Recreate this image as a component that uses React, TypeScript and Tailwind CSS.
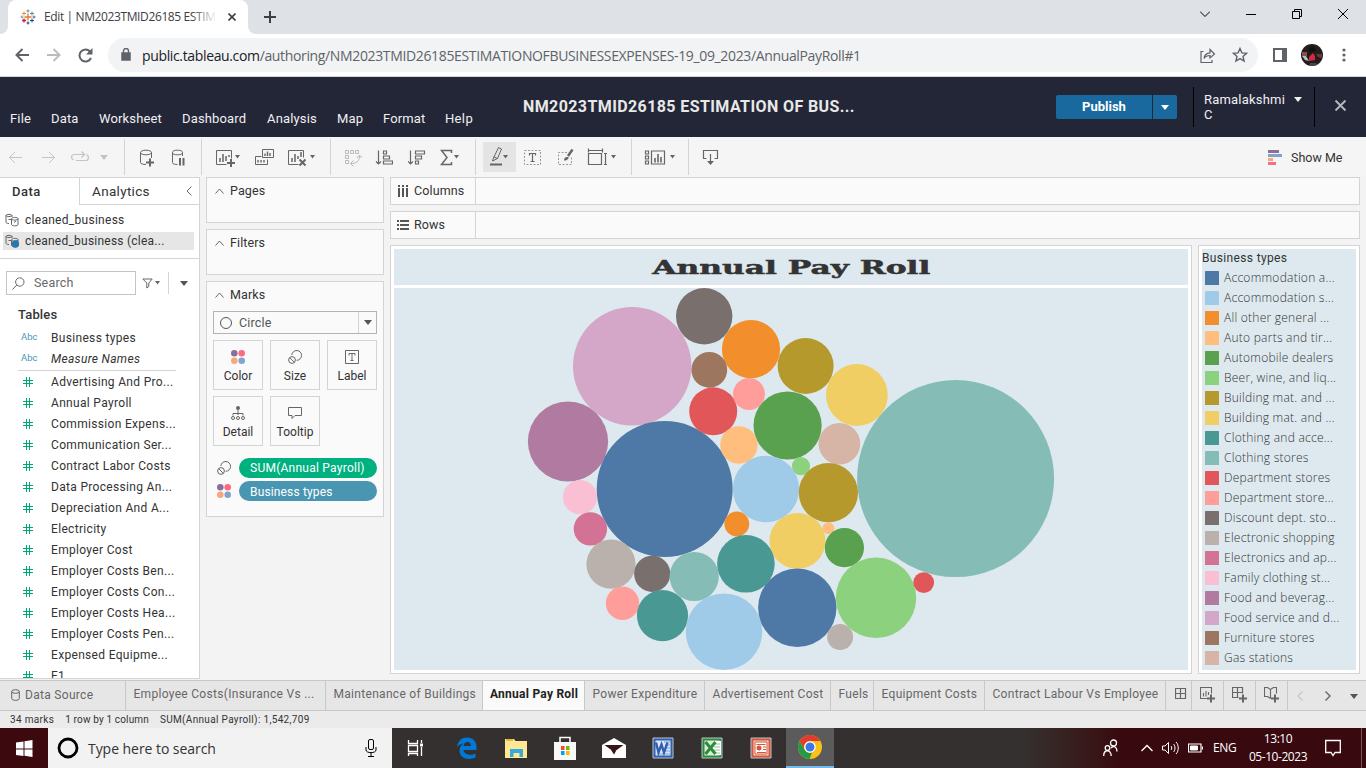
import React from "react";

type Kids = { children?: React.ReactNode };

const C = {
  blue: "#4e79a7", lblue: "#a0cbe8", orange: "#f28e2b", peach: "#ffbe7d", green: "#59a14f",
  lgreen: "#8cd17d", gold: "#b6992d", yellow: "#f1ce63", teal: "#499894", lteal: "#86bcb6",
  red: "#e15759", salmon: "#ff9d9a", dark: "#79706e", grey: "#bab0ac", rose: "#d37295",
  pink: "#fabfd2", plum: "#b07aa1", lplum: "#d4a6c8", brown: "#9d7660", tan: "#d7b5a6",
};

const bubbles: [number, number, number, string][] = [
  [704.2, 316.3, 28.2, C.dark], [632.2, 366.2, 59.2, C.lplum], [751, 349.2, 29.1, C.orange],
  [709.3, 369.8, 17.9, C.brown], [805.6, 366, 28, C.gold], [856.9, 395, 30.9, C.yellow],
  [955.6, 478.6, 98.5, C.lteal], [568, 441.5, 40.1, C.plum], [664.7, 489, 68, C.blue],
  [713.2, 411.3, 24, C.red], [749, 394, 16, C.salmon], [787.6, 425.5, 34.1, C.green],
  [738.9, 445, 18.7, C.peach], [839.4, 443.8, 20.8, C.tan], [801, 466.2, 9.1, C.lgreen],
  [766, 489, 33.2, C.lblue], [828.4, 492.7, 29.6, C.gold], [580, 497.2, 17.1, C.pink],
  [590.4, 528.9, 16.7, C.rose], [736.8, 524, 12.4, C.orange], [797.5, 541, 28, C.yellow],
  [828.4, 528.2, 6, C.peach], [844.4, 547.7, 19.6, C.green], [611, 564.1, 24.6, C.grey],
  [652.2, 573.8, 18.1, C.dark], [694.2, 576.5, 24.6, C.lteal], [745.9, 563.8, 28.8, C.teal],
  [622.5, 603.3, 16.7, C.salmon], [662.5, 615.6, 25.6, C.teal], [724, 631.7, 38.3, C.lblue],
  [797.3, 607.8, 39.2, C.blue], [876, 597.8, 40.2, C.lgreen], [923.7, 582.6, 10.4, C.red],
  [840.1, 637, 13, C.grey],
];

const legend: [string, string][] = [
  ["Accommodation a...", C.blue], ["Accommodation s...", C.lblue], ["All other general ...", C.orange],
  ["Auto parts and tir...", C.peach], ["Automobile dealers", C.green], ["Beer, wine, and liq...", C.lgreen],
  ["Building mat. and ...", C.gold], ["Building mat. and ...", C.yellow], ["Clothing and acce...", C.teal],
  ["Clothing stores", C.lteal], ["Department stores", C.red], ["Department store...", C.salmon],
  ["Discount dept. sto...", C.dark], ["Electronic shopping", C.grey], ["Electronics and ap...", C.rose],
  ["Family clothing st...", C.pink], ["Food and beverag...", C.plum], ["Food service and d...", C.lplum],
  ["Furniture stores", C.brown], ["Gas stations", C.tan],
];

const measures = [
  "Advertising And Pro...", "Annual Payroll", "Commission Expens...", "Communication Ser...",
  "Contract Labor Costs", "Data Processing An...", "Depreciation And A...", "Electricity", "Employer Cost",
  "Employer Costs Ben...", "Employer Costs Con...", "Employer Costs Hea...", "Employer Costs Pen...",
  "Expensed Equipme...", "F1",
];

function Svg({ w, h = 20, c = "", children }: Kids & { w: number; h?: number; c?: string }) {
  return (
    <svg width={w} height={h} viewBox={`0 0 ${w} ${h}`} fill="none" stroke="currentColor" className={`block shrink-0 ${c}`}>
      {children}
    </svg>
  );
}

function Caret({ c = "" }: { c?: string }) {
  return <Svg w={5} h={4} c={`mr-px ${c}`}><path d="M0 0H5L2.500 3.500Z" fill="currentColor" stroke="none" /></Svg>;
}

function Sep({ c = "" }: { c?: string }) {
  return <div className={`h-9 w-px shrink-0 bg-[#d4d4d4] ${c}`} />;
}

function BrowserTabs() {
  return (
    <div className="flex h-[34px] shrink-0 bg-[#dee1e6] text-[#202124]">
      <div className="flex w-[8px] items-end bg-white"><div className="h-full w-full rounded-br-lg bg-[#dee1e6]" /></div>
      <div className="flex w-[240px] items-center rounded-t-lg bg-white pl-[12px]">
        <Svg w={16} h={16}>
          <path d="M8 4.500v7M4.500 8h7" stroke="#e8762d" strokeWidth="1.300" />
          <path d="M8 .5v3M6.500 2h3" stroke="#5b879b" />
          <path d="M8 12.500v3M6.500 14h3" stroke="#1f447e" />
          <path d="M.5 8h3M2 6.500v3" stroke="#7099a6" /><path d="M12.500 8h3M14 6.500v3" stroke="#5b6591" />
          <path d="M4 2.500v4M2 4.500h4" stroke="#eb912c" /><path d="M12 2.500v4M10 4.500h4" stroke="#59879b" />
          <path d="M4 9.500v4M2 11.500h4" stroke="#c72037" strokeWidth="1.300" />
          <path d="M12 9.500v4M10 11.500h4" stroke="#1f447e" />
        </Svg>
        <div className="relative ml-[8px] w-[173px] overflow-hidden whitespace-nowrap text-[12px] tracking-[-0.38px] text-[#3c4043]">
          Edit | NM2023TMID26185 ESTIM
          <div className="absolute inset-y-0 right-0 w-[26px] bg-linear-to-r from-transparent to-white" />
        </div>
        <Svg w={8} h={8} c="ml-[11px] text-[#3c4043]"><path d="M.5.5l7 7M7.500.5l-7 7" strokeWidth="1.600" /></Svg>
      </div>
      <div className="w-[8px] bg-white"><div className="h-full rounded-bl-lg bg-[#dee1e6]" /></div>
      <Svg w={12} h={34} c="ml-[8px] text-[#3c4043]"><path d="M6 11v12M0 17h12" strokeWidth="2" /></Svg>
      <div className="ml-auto flex h-7 items-center text-black">
        <Svg w={10} h={6} c="mr-[36px]"><path d="M0 .5l5 5 5-5" /></Svg>
        <Svg w={10} h={10} c="mr-[36px]"><path d="M0 5.500h10" /></Svg>
        <Svg w={10} h={10} c="mr-[36px]"><path d="M.5 2.500h7v7h-7zM2.500 2.500v-2h7v7h-2" /></Svg>
        <Svg w={10} h={10} c="mr-[18px]"><path d="M0 0l10 10M10 0L0 10" /></Svg>
      </div>
    </div>
  );
}

function AddressBar() {
  return (
    <div className="flex h-[43px] shrink-0 items-center border-b border-[#d3d6da] bg-white pl-[15px] text-[#5f6368]">
      <Svg w={14} h={14}><path d="M14 7H1.500M7.500 1L1.500 7l6 6" strokeWidth="2" /></Svg>
      <Svg w={14} h={14} c="ml-[18px] text-[#babcbe]"><path d="M0 7h12.500M6.500 1l6 6-6 6" strokeWidth="2" /></Svg>
      <Svg w={15} h={15} c="ml-[17px]"><path d="M13 10A6 6 0 1 1 12 3.500" strokeWidth="2" /><path d="M14.500 0v6.500H8z" fill="currentColor" stroke="none" /></Svg>
      <div className="ml-[15px] flex h-[34px] w-[1150px] items-center rounded-full bg-[#f1f3f4]">
        <Svg w={10} h={14} c="ml-[13px]"><path d="M1 5h8v7H1z" fill="currentColor" strokeWidth="1.500" /><path d="M2.500 5V3a2.500 2.500 0 0 1 5 0v2" strokeWidth="1.400" /></Svg>
        <div className="ml-[11px] whitespace-nowrap text-[14px] tracking-[-0.355px]">
          <span className="text-[#202124]">public.tableau.com</span>/authoring/NM2023TMID26185ESTIMATIONOFBUSINESSEXPENSES-19_09_2023/AnnualPayRoll#1
        </div>
        <Svg w={16} h={15} c="mr-[16px] ml-auto"><path d="M3.500 3.500H1v11h11v-2.500M4 10.500C4.500 6.500 6.500 5 10 4.800V1.500l4.500 4.500L10 10V7.500C7.500 7.500 5.500 8 4 10.500z" strokeWidth="1.200" /></Svg>
        <Svg w={16} h={16} c="mr-[10px]"><path d="M8 1.500l1.900 4.400 4.700.4-3.600 3.100 1.100 4.600L8 11.600 3.900 14 5 9.400 1.400 6.300l4.700-.4z" strokeWidth="1.400" /></Svg>
      </div>
      <Svg w={14} h={14} c="ml-[15px]"><path d="M1 1h12v12H1z" strokeWidth="2" /><path d="M9 1h4v12H9z" fill="currentColor" stroke="none" /></Svg>
      <Svg w={22} h={22} c="ml-[14px]">
        <clipPath id="face"><circle cx="11" cy="11" r="11" /></clipPath>
        <g clipPath="url(#face)" stroke="none">
          <path d="M0 0h22v22H0z" fill="#241c1c" /><path d="M1 8h5v4H1z" fill="#8a5145" /><path d="M1 12h4l3 5-4-1z" fill="#a9c3cc" />
          <path d="M8 13l4-4 2 3v4l-6 1z" fill="#d8283f" /><path d="M15 10h6v4l-4-1z" fill="#5d4038" /><path d="M8 4l4-2 3 5-6 2z" fill="#111" />
          <path d="M9 19h6l2 3H8z" fill="#4a4544" />
        </g>
      </Svg>
      <Svg w={4} h={14} c="ml-[19px]"><g fill="currentColor" stroke="none"><circle cx="2" cy="2" r="1.600" /><circle cx="2" cy="7" r="1.600" /><circle cx="2" cy="12" r="1.600" /></g></Svg>
    </div>
  );
}

function Header() {
  return (
    <div className="flex h-[60px] shrink-0 bg-[#232637] font-['Roboto',sans-serif] text-[#f0f0f2]">
      <div className="flex w-[523px] items-end pb-[10px] pl-[10px] text-[13px] leading-[17px] tracking-[0.15px]">
        <span className="w-[41px]">File</span><span className="w-[48px]">Data</span><span className="w-[83px]">Worksheet</span>
        <span className="w-[85px]">Dashboard</span><span className="w-[70px]">Analysis</span><span className="w-[46px]">Map</span>
        <span className="w-[62px]">Format</span><span className="tracking-[0.35px]">Help</span>
      </div>
      <div className="w-[533px] pt-[18px] text-[16px] leading-6 font-bold tracking-[0.4px] whitespace-nowrap text-[#e8e8e8]">NM2023TMID26185 ESTIMATION OF BUS...</div>
      <div className="mt-[18px] flex h-6 w-[121px] gap-px">
        <div className="w-24 rounded-l-xs bg-[#1a699e] text-center text-[13px] leading-6 font-bold text-white">Publish</div>
        <div className="flex flex-1 items-center justify-center rounded-r-xs bg-[#1a699e] text-white"><Svg w={8} h={5}><path d="M0 0h8L4 5z" fill="currentColor" stroke="none" /></Svg></div>
      </div>
      <div className="mt-[10px] ml-[16px] flex h-10 w-[122px] border-x border-black pt-[5px] pl-[10px] text-[13px] leading-[15px] tracking-[0.2px]">
        <div className="w-[90px]">Ramalakshmi<br />C</div>
        <Svg w={8} h={5} c="mt-[5px]"><path d="M0 0h8L4 5z" fill="currentColor" stroke="none" /></Svg>
      </div>
      <Svg w={11} h={11} c="mt-[23px] ml-[20px] text-[#b5b6bc]"><path d="M.5.5l10 10M10.500.5l-10 10" strokeWidth="2" /></Svg>
    </div>
  );
}

function Toolbar() {
  return (
    <div className="flex h-10 shrink-0 items-center bg-[#f5f5f5] pl-[8px] text-[#666]">
      <Svg w={16} c="text-[#c4c4c4]"><path d="M14 10.500H1.500M7 5l-5.500 5.500L7 16" /></Svg>
      <Svg w={16} c="ml-[17px] text-[#c4c4c4]"><path d="M1 10.500h12.500M8 5l5.500 5.500L8 16" /></Svg>
      <Svg w={20} c="ml-[13px] text-[#c4c4c4]"><path d="M3.500 13C.5 11.500 1 7.500 4.500 7.500H14M11.500 4.500l3 3-3 3M6 13.500h9.500c3.500 0 4-4.500 1-6" strokeWidth="1.200" /></Svg>
      <Svg w={8} h={5} c="ml-[10px] text-[#c4c4c4]"><path d="M0 0h8L4 5z" fill="currentColor" stroke="none" /></Svg>
      <Sep c="ml-[16px]" />
      <Svg w={16} c="ml-[14px]"><path d="M7 17.500c-3 0-5.500-.7-5.500-2V5.500M12.500 5.500V11" /><ellipse cx="7" cy="5.500" rx="5.500" ry="2.300" /><path d="M11 11.500v8M7 15.500h8" strokeWidth="2" /></Svg>
      <Svg w={14} c="ml-[16px]"><path d="M6.500 17.500c-3 0-5-.7-5-2V5.500M11.500 5.500V9" /><ellipse cx="6.500" cy="5.500" rx="5" ry="2.300" /><path d="M9 11v7.500M12.500 11v7.500" strokeWidth="2" /></Svg>
      <Sep c="ml-[16px]" />
      <Svg w={20} c="ml-[13px]"><path d="M11.500 17.500h-10v-14h15v8" /><path d="M5 11v4M8 7v8M11 9v5M14 8v2" strokeWidth="1.500" /><path d="M16 12v8M12 16h8" strokeWidth="2" /></Svg>
      <Caret /><div className="w-[14px]" />
      <Svg w={19}><path d="M7.500 2.500h11v8h-11zM12.500 12.500v5h-12v-8h6" /><path d="M10 6.500v2.500M12.500 4.500V9M15 6v3M3 13v2.500M6 13v2.500M9 13v2.500" strokeWidth="1.400" /></Svg>
      <Svg w={21} c="ml-[13px]"><path d="M11.500 17.500h-10v-14h15v7" /><path d="M5 11v4M8 7v8M11 9v3M14 5v5" strokeWidth="1.500" /><path d="M12.500 12.500l6 6M18.500 12.500l-6 6" strokeWidth="2" /></Svg>
      <Caret c="ml-[2px]" />
      <Sep c="ml-[14px]" />
      <Svg w={18} c="ml-[13px] text-[#b9b9b9]"><path d="M1.500 3.500h3v3h-3zM6.500 3.500h3v3h-3zM11.500 3.500h3v3h-3zM1.500 8.500h3v3h-3zM1.500 13.500h3v3h-3zM7 16.500c5 0 8.500-2 8.500-7.500M9.500 13.500l-3 3 3 3M13 11l2.500-3 2.500 3" /></Svg>
      <Svg w={18} c="ml-[13px]"><path d="M3.500 3.500V16M1 14.500l2.500 2.500L6 14.500M8.500 4h3v3h-3zM8.500 9h6v3h-6zM8.500 14h9v3h-9z" strokeWidth="1.200" /></Svg>
      <Svg w={18} c="ml-[15px]"><path d="M2.500 3.500V16M0 14.500l2.500 2.500L5 14.500M7.500 4h9v3h-9zM7.500 9h6v3h-6zM7.500 14h3v3h-3z" strokeWidth="1.200" /></Svg>
      <Svg w={14} c="ml-[14px]"><path d="M11.500 6V3.500h-10l5.500 7-5.500 7h10V15" strokeWidth="1.500" /></Svg>
      <Caret />
      <Sep c="ml-[15px]" />
      <div className="ml-[7px] flex h-[30px] w-[33px] items-center bg-[#e4e4e4] pl-[7px]">
        <Svg w={13}><path d="M8.500.5l3 1.500-4 9.500-3.500-1.500zM4 9.500L2.500 14l5-2.500" /><path d="M0 17.500h12" strokeWidth="2" /></Svg>
        <Caret />
      </div>
      <Svg w={18} c="ml-[8px]"><path d="M.5 3.500h16v14H.5z" strokeDasharray="2 1.500" stroke="#999" /><path d="M5.500 8.500v-2h6v2M8.500 6.500v8M6.500 14.500h4" strokeWidth="1.200" /></Svg>
      <Svg w={17} c="ml-[15px]"><path d="M10 5.500H1.500v12h13V9" strokeDasharray="2 1.500" stroke="#999" /><path d="M15.500 2.500L11 9" strokeWidth="2.500" /><path d="M7 13.500c0-3 2-4 4-3.500s-1 4-4 3.500z" fill="currentColor" stroke="none" /></Svg>
      <Svg w={21} c="ml-[13px]"><path d="M1.500 6.500h13v11h-13zM1 3.500h15M1.500 1.500v4M15.500 1.500v4M18.500 6.500v11M17 6.500h3M17 17.500h3" strokeWidth="1.200" /></Svg>
      <Caret c="ml-[3px]" />
      <Sep c="ml-[14px]" />
      <Svg w={22} c="ml-[12px]"><path d="M1.500 4h3v3h-3zM1.500 9h3v3h-3zM1.500 14h3v3h-3zM7.500 4h13v13h-13z" strokeWidth="1.200" /><path d="M11 11v4.500M14 7v8.500M17 10v5.500" strokeWidth="1.600" /></Svg>
      <Caret c="ml-[4px]" />
      <Sep c="ml-[12px]" />
      <Svg w={17} c="ml-[13px]"><path d="M4.500 11.500h-3v-8h14v8h-3M8.500 7v10" strokeWidth="1.200" /><path d="M5 14h7l-3.500 4z" fill="currentColor" stroke="none" /></Svg>
      <Svg w={14} h={15} c="mr-[9px] ml-auto"><g stroke="none"><path d="M0 0h11v3H0z" fill="#8b6f9b" /><path d="M0 4h14v3H0z" fill="#83a3cd" /><path d="M0 8h5v3H0z" fill="#f6a77b" /><path d="M0 12h8v3H0z" fill="#fb6b82" /></g></Svg>
      <div className="w-[75px] pt-[2px] font-['Roboto',sans-serif] text-[12.5px] text-[#333]">Show Me</div>
    </div>
  );
}

function DbIcon({ dot = false }: { dot?: boolean }) {
  return (
    <Svg w={14} h={14} c="text-[#666]">
      <path d="M4 10.500c-2 0-3-.5-3-1.500V2.500C1 1 7 1 7 2.500V4M1 2.500c0 1.300 6 1.300 6 0M3.500 6.500h3v3" />
      <path d="M6.500 6.500v5c0 1.800 6.500 1.800 6.500 0v-6c0-1.500-6.500-1.500-6.500.300 0 1.700 6.500 1.700 6.500 0M9 9.500l2-1.500" />
      {dot && <circle cx="10.500" cy="10" r="3.700" fill="#2a77b0" stroke="none" />}
    </Svg>
  );
}

function DataPane() {
  return (
    <div className="h-[502px] w-[200px] overflow-hidden border-r border-b border-[#d4d4d4] bg-white font-['Roboto',sans-serif] text-[12px] tracking-[0.32px] text-[#333]">
      <div className="flex h-[28px] border-t border-[#d4d4d4] text-[13px]">
        <div className="w-[79px] pl-[12px] leading-[27px] font-medium tracking-[0.5px]">Data</div>
        <div className="flex flex-1 items-center border-b border-l border-[#d4d4d4] pl-[12px] text-[13.500px]">
          Analytics<Svg w={6} h={10} c="mr-[7px] ml-auto text-[#666]"><path d="M5.500.5L1 5l4.500 4.500" /></Svg>
        </div>
      </div>
      <div className="mt-[4px] flex h-[21px] items-center gap-[6px] pl-[5px] tracking-[0.28px]"><DbIcon />cleaned_business</div>
      <div className="mt-[2px] ml-[3px] flex h-[18px] w-[191px] items-center gap-[6px] bg-[#e6e6e6] pl-[2px] tracking-[0.23px]"><DbIcon dot />cleaned_business (clea...</div>
      <div className="mt-[8px] h-px bg-[#d4d4d4]" />
      <div className="mt-[12px] flex h-6 items-center pl-[6px]">
        <div className="flex h-6 w-[130px] items-center border border-[#c4c4c4] pl-[5px] text-[12.500px] tracking-[0.2px] text-[#6a6a6a]">
          <Svg w={13} h={13} c="mr-[9px]"><circle cx="7.800" cy="5" r="4.200" /><path d="M4.800 8L.5 12.500" /></Svg>Search
        </div>
        <Svg w={11} h={11} c="ml-[6px] text-[#666]"><path d="M.8 1h9.400L6.800 5v3.500l-2 1.500V5z" /></Svg>
        <Caret c="ml-[2px] text-[#666]" />
        <div className="ml-[7px] h-[22px] w-px bg-[#d4d4d4]" />
        <Svg w={8} h={5} c="ml-[11px] text-[#555]"><path d="M0 0h8L4 5z" fill="currentColor" stroke="none" /></Svg>
      </div>
      <div className="mt-[9px] mb-px h-[22px] pl-[18px] text-[13px] leading-[22px] font-medium tracking-[0.15px]">Tables</div>
      <div className="flex h-[21px] items-center pl-[21px]"><span className="w-[30px] text-[9.500px] tracking-normal text-[#4996b2]">Abc</span>Business types</div>
      <div className="flex h-[21px] items-center pl-[21px]"><span className="w-[30px] text-[9.500px] tracking-normal text-[#4996b2]">Abc</span><i>Measure Names</i></div>
      <div className="mt-px ml-[18px] h-px w-[158px] bg-[#d4d4d4]" />
      {measures.map((m) => (
        <div key={m} className="flex h-[21px] items-center whitespace-nowrap pl-[23px]">
          <Svg w={10} h={10} c="mr-[18px] text-[#00a878]"><path d="M3.500 0v10M6.500 0v10M0 3.500h10M0 6.500h10" /></Svg>{m}
        </div>
      ))}
    </div>
  );
}

function ColorDots() {
  return (
    <Svg w={14} h={14}><g stroke="none"><circle cx="3.300" cy="3.300" r="3.300" fill="#8b6f9b" /><circle cx="10.700" cy="3.300" r="3.300" fill="#fb6b82" /><circle cx="3.300" cy="10.700" r="3.300" fill="#f6a77b" /><circle cx="10.700" cy="10.700" r="3.300" fill="#83a3cd" /></g></Svg>
  );
}

function SizeIcon() {
  return (
    <Svg w={14} h={14} c="text-[#666]"><path d="M3.800 5A4.900 4.900 0 1 1 8.600 10.300" /><circle cx="4" cy="10" r="3.400" /><path d="M2 8l4 4" /></Svg>
  );
}

function MarkButton({ label, children }: Kids & { label: string }) {
  return (
    <div className="flex h-[50px] w-[50px] flex-col items-center border border-[#d4d4d4] pt-[9px] text-[#666]">
      {children}
      <span className="mt-[4px] leading-[17px] text-[#333]">{label}</span>
    </div>
  );
}

function CardTitle({ children }: Kids) {
  return (
    <div className="flex h-[26px] items-center gap-[6px] pl-[8px] text-[12.500px] tracking-[0.1px]">
      <Svg w={9} h={6} c="text-[#666]"><path d="M.5 5.500l4-4.500 4 4.500" /></Svg>{children}
    </div>
  );
}

function Cards() {
  return (
    <div className="ml-[6px] flex w-[178px] flex-col gap-[7px] font-['Roboto',sans-serif] text-[12px] text-[#333]">
      <div className="h-[46px] border border-[#d4d4d4] bg-[#fafafa]"><CardTitle>Pages</CardTitle></div>
      <div className="-mt-px h-[46px] border border-[#d4d4d4] bg-[#fafafa]"><CardTitle>Filters</CardTitle></div>
      <div className="-mt-px h-[236px] border border-[#d4d4d4] bg-[#fafafa] pl-[6px]">
        <div className="-ml-[6px]"><CardTitle>Marks</CardTitle></div>
        <div className="mt-[3px] flex h-[23px] w-[164px] items-center border border-[#b4b4b4] pl-[6px] text-[12.500px] tracking-[0.15px] text-[#555]">
          <Svg w={12} h={12} c="mr-[7px]"><circle cx="6" cy="6" r="5.500" /></Svg><span className="pt-px">Circle</span>
          <div className="ml-auto flex h-full w-[18px] items-center justify-center border-l border-[#d4d4d4]"><Svg w={8} h={5}><path d="M0 0h8L4 5z" fill="currentColor" stroke="none" /></Svg></div>
        </div>
        <div className="mt-[6px] grid w-[164px] grid-cols-[50px_50px_50px] gap-x-[7px] gap-y-[6px]">
          <MarkButton label="Color"><ColorDots /></MarkButton>
          <MarkButton label="Size"><SizeIcon /></MarkButton>
          <MarkButton label="Label"><Svg w={14} h={14}><path d="M.5.5h13v13H.5zM4 5.500v-2h6v2M7 3.500v7M5.500 10.500h3" /></Svg></MarkButton>
          <MarkButton label="Detail"><Svg w={14} h={14}><circle cx="7" cy="2" r="2" fill="currentColor" stroke="none" /><path d="M7 4v5M2 9.500v-2h10v2" /><circle cx="2" cy="12" r="1.500" /><circle cx="7" cy="12" r="1.500" /><circle cx="12" cy="12" r="1.500" /></Svg></MarkButton>
          <MarkButton label="Tooltip"><Svg w={14} h={14}><path d="M.5 1.500h13v8H7L4 12.500v-3H.5z" /></Svg></MarkButton>
        </div>
        <div className="mt-[12px] flex items-center pl-[4px]"><SizeIcon /><div className="ml-[8px] h-5 w-[138px] rounded-full bg-[#00b180] pl-[11px] text-[12px] leading-[21px] tracking-[0.25px] text-white">SUM(Annual Payroll)</div></div>
        <div className="mt-[3px] flex items-center pl-[4px]"><ColorDots /><div className="ml-[8px] h-5 w-[138px] rounded-full bg-[#4996b2] pl-[11px] text-[12px] leading-[22px] tracking-[0.15px] text-white">Business types</div></div>
      </div>
    </div>
  );
}

function Shelf({ label, children }: Kids & { label: string }) {
  return (
    <div className="flex h-[28px] w-[970px] border border-[#d4d4d4] bg-[#fafafa] text-[12.500px] tracking-[0.12px] text-[#333]">
      <div className="flex w-[85px] items-center gap-[5px] border-r border-[#d4d4d4] pl-[6px]">{children}{label}</div>
    </div>
  );
}

function Viz() {
  return (
    <div className="ml-[6px] flex w-[970px] flex-col font-['Roboto',sans-serif]">
      <Shelf label="Columns"><Svg w={12} h={12} c="text-[#555]"><path d="M2 0v2M6 0v2M10 0v2M2 3v9M6 3v9M10 3v9" strokeWidth="2" /></Svg></Shelf>
      <div className="h-[6px]" />
      <Shelf label="Rows"><Svg w={12} h={10} c="text-[#555]"><path d="M0 1h2M0 5h2M0 9h2M3 1h9M3 5h9M3 9h9" strokeWidth="2" /></Svg></Shelf>
      <div className="mt-[6px] flex gap-[6px]">
        <div className="h-[429px] w-[802px] border border-[#d4d4d4] bg-white p-[3px]">
          <div className="flex h-[36px] items-center justify-center bg-[#dde9ef] pt-[2px]">
            <span className="inline-block scale-x-[1.690] font-['DejaVu_Serif',serif] text-[18.500px] leading-none font-bold whitespace-nowrap text-[#333] [-webkit-text-stroke:0.500px_#333]">Annual Pay Roll</span>
          </div>
          <svg className="mt-[3px] block bg-[#dde9ef]" width="794" height="382" viewBox="394 288 794 382">
            {bubbles.map(([x, y, r, f], i) => <circle key={i} cx={x} cy={y} r={r} fill={f} />)}
          </svg>
        </div>
        <div className="h-[429px] w-[162px] border border-[#d4d4d4] bg-white p-[3px]">
          <div className="h-[421px] bg-[#dde9ef] text-[#333]">
            <div className="h-[19px] text-[12px] leading-[19px] tracking-[0.35px]">Business types</div>
            {legend.map(([t, c], i) => (
              <div key={i} className="flex h-5 items-center gap-[5px] pl-[3px] font-['Open_Sans',sans-serif] text-[12px] font-light tracking-[0.25px] whitespace-nowrap">
                <svg width="14" height="14" className="shrink-0"><rect width="14" height="14" rx=".5" fill={c} /></svg>{t}
              </div>
            ))}
          </div>
        </div>
      </div>
    </div>
  );
}

function SheetTabs() {
  const tab = "h-full shrink-0 border-r border-[#c8c8c8] pl-[7.500px] leading-[27px]";
  return (
    <div className="flex h-[31px] shrink-0 border-y border-[#c8c8c8] bg-[#e6e6e6] font-['Roboto',sans-serif] text-[12px] tracking-[0.3px] whitespace-nowrap text-[#666]">
      <div className="flex h-full w-[126px] items-center gap-[5px] border-r border-[#c8c8c8] pb-[2px] pl-[11px]">
        <Svg w={9} h={12}><ellipse cx="4.500" cy="2.500" rx="3.800" ry="1.800" /><path d="M.7 2.500v7c0 2.400 7.600 2.400 7.600 0v-7" /></Svg>Data Source
      </div>
      <div className={`${tab} w-[200px]`}>Employee Costs(Insurance Vs ...</div>
      <div className={`${tab} w-[157px]`}>Maintenance of Buildings</div>
      <div className="h-full w-[102px] shrink-0 border-r border-[#c8c8c8] bg-[#fafafa] pl-[7px] leading-[27px] font-bold tracking-[0.25px] text-[#222]">Annual Pay Roll</div>
      <div className={`${tab} w-[120px]`}>Power Expenditure</div>
      <div className={`${tab} w-[126px]`}>Advertisement Cost</div>
      <div className={`${tab} w-[43px]`}>Fuels</div>
      <div className={`${tab} w-[111px]`}>Equipment Costs</div>
      <div className={`${tab} w-[181px]`}>Contract Labour Vs Employee</div>
      <div className="flex w-[26px] shrink-0 justify-center border-r border-[#c8c8c8] pt-[7px] pl-[5px]"><Svg w={12} h={12}><path d="M.5.5h10v10H.5zM5.500.5v10M.5 5.500h10" strokeWidth="1.200" /></Svg></div>
      <div className="flex w-8 shrink-0 justify-center border-r border-[#c8c8c8] pt-[6px]"><Svg w={16} h={16}><path d="M7.500 11.500h-7v-11h11v6M3.500 6v3.500M6 4v5.500M8.500 5v3" strokeWidth="1.100" /><path d="M11 7.500v8M7 11.500h8" strokeWidth="2" /></Svg></div>
      <div className="flex w-8 shrink-0 justify-center border-r border-[#c8c8c8] pt-[6px]"><Svg w={16} h={16}><path d="M6.500 10.500h-6V.5h10v6M5.500.5v10M.5 5.500h10" strokeWidth="1.200" /><path d="M11 7.500v8M7 11.500h8" strokeWidth="2" /></Svg></div>
      <div className="flex w-8 shrink-0 justify-center border-r border-[#c8c8c8] pt-[6px]"><Svg w={16} h={16}><path d="M6.500 11.500v-9l-3-2h-3v9h3l3 2M6.500 2.500l3-2h3v6" strokeWidth="1.100" /><path d="M11 7.500v8M7 11.500h8" strokeWidth="2" /></Svg></div>
      <Svg w={6} h={10} c="mt-[10px] ml-[9px] text-[#c4c4c4]"><path d="M5.500.5L1 5l4.500 4.500" strokeWidth="1.200" /></Svg>
      <Svg w={6} h={10} c="mt-[10px] ml-[22px]"><path d="M.5.5L5 5 .5 9.500" strokeWidth="1.400" /></Svg>
      <Svg w={8} h={5} c="mt-[13px] ml-[19px] text-[#555]"><path d="M0 0h8L4 5z" fill="currentColor" stroke="none" /></Svg>
    </div>
  );
}

function OfficeIcon({ kind }: { kind: "w" | "x" | "p" }) {
  const c = kind === "w" ? "#2f5fae" : kind === "x" ? "#2e8b3d" : "#d4573a";
  const bg = kind === "w" ? "#dbe7f8" : kind === "x" ? "#d9edd8" : "#f6d9cf";
  return (
    <Svg w={22} h={22}>
      <path d="M1 1h20v20H1z" fill={c} stroke="#b9c4cf" />
      <path d="M3.500 3.500h15v15h-15z" fill={bg} stroke="none" />
      {kind === "w" && <><path d="M12 5h6M13 8h5M13 11h5M12 14h6M5 17h13" stroke="#7f9fd0" /><path d="M4 5.500l2.500 10 3-8 2.500 8L15.500 5.500" stroke={c} strokeWidth="2.400" /></>}
      {kind === "x" && <><path d="M12 4h8v14h-8z" fill="#fff" stroke="none" /><path d="M13 7h6M13 10h6M13 13h6M13 16h6" stroke="#8fc397" /><path d="M4.500 5l10 12M14.500 5l-10 12" stroke={c} strokeWidth="3" /></>}
      {kind === "p" && <><path d="M5 5h12v12H5z" fill="#fff" stroke={c} /><circle cx="9" cy="11" r="2.500" fill={c} stroke="none" /><path d="M6.500 7.500h9M13 10h3M13 12.500h3M7 15.500h9" stroke={c} /></>}
    </Svg>
  );
}

function Taskbar() {
  const cell = "flex w-[49px] shrink-0 items-center justify-center";
  return (
    <div className="flex h-10 shrink-0 bg-linear-to-r from-[#33302f] from-75% to-[#38090f] to-82% text-white">
      <div className="flex w-12 items-center justify-center bg-[#3b090e]"><Svg w={17} h={17}><path d="M0 2.500l7.500-1v7H0zM8.500 1.300L16.500 0v8.500h-8zM0 9.500h7.500v6.500L0 15zM8.500 9.500h8V17l-8-1.200z" fill="#fff" stroke="none" /></Svg></div>
      <div className="flex w-[344px] items-center bg-[#f2f2f2] pl-[9px] text-black">
        <Svg w={22} h={22}><circle cx="11" cy="11" r="9" strokeWidth="2.800" /></Svg>
        <span className="ml-[9px] text-[14px] tracking-[-0.05px] text-[#333]">Type here to search</span>
        <Svg w={12} h={18} c="mr-[15px] ml-auto"><rect x="3.500" y=".5" width="5" height="10" rx="1.500" /><path d="M1 8v3c0 3.500 10 3.500 10 0V8M6 13.500V17M3 17.500h6" /></Svg>
      </div>
      <div className={`${cell} -ml-px`}><Svg w={18} h={16}><path d="M1.500 0v3.500h9V0M1.500 5.500h9v6h-9zM1.500 16v-2.500h9V16M14.500 0v3M14.500 7v9" strokeWidth="1.300" /><path d="M13 3.500h3v3h-3z" fill="#fff" stroke="none" /></Svg></div>
      <div className={`${cell} ml-[2px]`}><Svg w={22} h={22}><path d="M1 10C2 3.500 6 .5 11 .5c6 0 9.500 4 9.500 9.500v3H7.500c.3 4 6.500 6.500 12 3.500v4c-6.500 3-16 1.500-16-7 0-3 1.500-5.500 4-7C4 7 2.500 8 1 10zM7.500 9H15c.2-5.500-7-5.500-7.500 0z" fill="#0078d7" stroke="none" /></Svg></div>
      <div className={cell}><Svg w={22} h={20}><path d="M0 1h9l1.500 2H22v17H0z" fill="#ffe793" stroke="none" /><path d="M1 1h7v2H1z" fill="#e8b73a" stroke="none" /><path d="M5 19v-8h13v8h-3.500v-4H8.500v4z" fill="#35aadc" stroke="none" /></Svg></div>
      <div className={cell}><Svg w={22} h={24}><path d="M6 6V1.500h10V6" stroke="#fff" strokeWidth="1.500" /><path d="M0 6h22v18H0z" fill="#f8f8f8" stroke="none" /><path d="M7 10h3.500v4H7z" fill="#f04b22" stroke="none" /><path d="M12 10h3.500v4H12z" fill="#79b700" stroke="none" /><path d="M7 15h3.500v4H7z" fill="#00a3ee" stroke="none" /><path d="M12 15h3.500v4H12z" fill="#ffb700" stroke="none" /></Svg></div>
      <div className={cell}><Svg w={24} h={20}><path d="M0 7L12 0l12 7v13H0z" fill="#fff" stroke="none" /><path d="M2.500 7h19L12 14z" fill="#3a1518" stroke="none" /><path d="M9 12l3 4.500L14 13z" fill="#3a1518" stroke="none" /></Svg></div>
      <div className={cell}><OfficeIcon kind="w" /></div>
      <div className={cell}><OfficeIcon kind="x" /></div>
      <div className={`${cell} mr-px`}><OfficeIcon kind="p" /></div>
      <div className="flex w-12 shrink-0 items-center justify-center border-b-2 border-[#76b9ed] bg-[#5b5b5b]">
        <Svg w={24} h={24}><g stroke="none"><circle cx="12" cy="12" r="12" fill="#fbc116" /><path d="M1.600 6A12 12 0 0 1 22.400 6H12a6 6 0 0 0-5.200 9z" fill="#e33b2e" /><path d="M1.600 6L6.800 15A6 6 0 0 0 14 17.600L11.500 24A12 12 0 0 1 1.600 6z" fill="#229b49" /><circle cx="12" cy="12" r="5.800" fill="#fff" /><circle cx="12" cy="12" r="4.500" fill="#3b78e7" /></g></Svg>
      </div>
      <div className="ml-auto flex items-center text-[12px]">
        <Svg w={16} h={18}><circle cx="10.500" cy="4" r="3" strokeWidth="1.300" /><circle cx="4.500" cy="9" r="2.300" strokeWidth="1.300" /><path d="M.7 17c0-7 7.500-7 7.500 0M8 9c3-3 6-1 6 3.500" strokeWidth="1.300" /></Svg>
        <Svg w={12} h={8} c="ml-[22px]"><path d="M.5 7L6 1.500 11.500 7" strokeWidth="1.300" /></Svg>
        <Svg w={18} h={14} c="ml-[9px]"><path d="M.5 5h2.500l3.500-3.500v11L3 9H.5zM9 5c1 1 1 3 0 4M11.500 3c2 2 2 6 0 8M14 1c3 3 3 9 0 12" /></Svg>
        <Svg w={15} h={10} c="ml-[8px]"><path d="M.5 1h12.500v8H.5z" strokeWidth="1.200" /><path d="M2.500 3h7v4h-7z" fill="#fff" /><path d="M14.500 3.500v3" /></Svg>
        <span className="ml-[10px] w-[23px] tracking-[-0.3px]">ENG</span>
        <div className="ml-[12px] w-[60px] text-center leading-[18px] tracking-[-0.45px] whitespace-nowrap">13:10<br />05-10-2023</div>
        <Svg w={16} h={18} c="mr-[20px] ml-[17px]"><path d="M.7 1.500h14.600v12H10l-2 3-2-3H.7z" strokeWidth="1.300" /></Svg>
        <div className="mr-[4px] h-10 w-px bg-[#77565a]" />
      </div>
    </div>
  );
}

export default function App() {
  return (
    <div className="flex h-[768px] w-[1366px] flex-col overflow-hidden bg-[#f3f3f3] font-['Open_Sans',sans-serif]">
      <BrowserTabs />
      <AddressBar />
      <Header />
      <Toolbar />
      <div className="flex h-[503px] shrink-0">
        <DataPane />
        <Cards />
        <Viz />
      </div>
      <SheetTabs />
      <div className="flex h-[17px] shrink-0 items-center gap-[11px] bg-[#ebebeb] pl-[10px] font-['Roboto',sans-serif] text-[10px] tracking-[0.33px] text-[#333]">
        <span>34 marks</span><span className="tracking-[0.15px]">1 row by 1 column</span><span>SUM(Annual Payroll): 1,542,709</span>
      </div>
      <Taskbar />
    </div>
  );
}
